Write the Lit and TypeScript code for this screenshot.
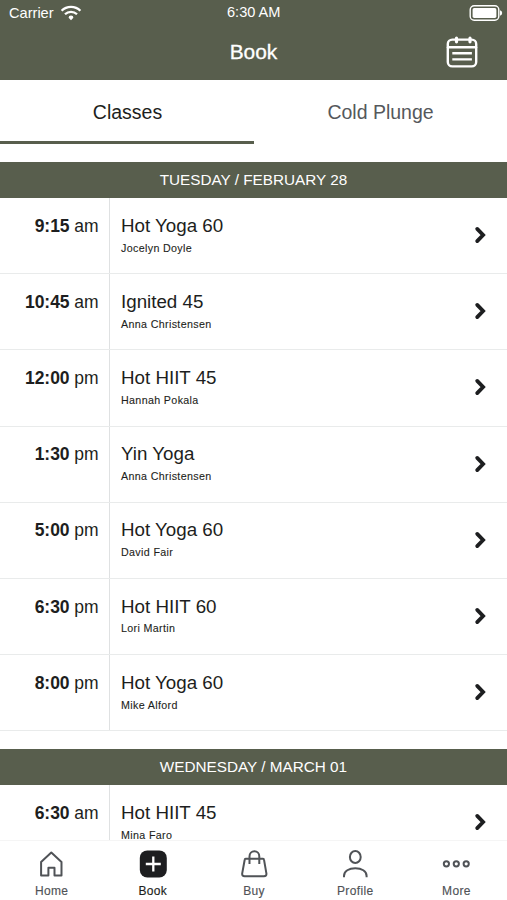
import { LitElement, html, css, svg } from "lit";
import { customElement, property } from "lit/decorators.js";
import { classMap } from "lit/directives/class-map.js";

interface ClassItem {
  time: string;
  period: string;
  name: string;
  teacher: string;
}

interface Day {
  label: string;
  items: ClassItem[];
}

const item = (time: string, period: string, name: string, teacher: string): ClassItem => ({
  time,
  period,
  name,
  teacher,
});

const DAYS: Day[] = [
  {
    label: "TUESDAY / FEBRUARY 28",
    items: [
      item("9:15", "am", "Hot Yoga 60", "Jocelyn Doyle"),
      item("10:45", "am", "Ignited 45", "Anna Christensen"),
      item("12:00", "pm", "Hot HIIT 45", "Hannah Pokala"),
      item("1:30", "pm", "Yin Yoga", "Anna Christensen"),
      item("5:00", "pm", "Hot Yoga 60", "David Fair"),
      item("6:30", "pm", "Hot HIIT 60", "Lori Martin"),
      item("8:00", "pm", "Hot Yoga 60", "Mike Alford"),
    ],
  },
  {
    label: "WEDNESDAY / MARCH 01",
    items: [item("6:30", "am", "Hot HIIT 45", "Mina Faro")],
  },
];

const NAV = [
  {
    label: "Home",
    icon: svg`<path d="M5.1 13 15.3 3.6 25.5 13V26.4H18.5V18.8H12.4V26.4H5.1Z"/>`,
  },
  {
    label: "Book",
    active: true,
    icon: svg`<rect x="1.8" y="1.4" width="27" height="27" rx="7.5" fill="currentColor" stroke="none"/><path stroke="#fff" stroke-width="2.3" d="M15.3 7.5v15M7.8 15h15"/>`,
  },
  {
    label: "Buy",
    icon: svg`<path d="M6.8 9.8H24a1 1 0 0 1 1 .9L27.4 24.4Q27.7 27.2 25 27.2H5.6Q2.9 27.2 3.2 24.4L5.7 10.7a1 1 0 0 1 1-.9ZM10.5 15V7.4a4.9 5.2 0 0 1 9.8 0V15"/>`,
  },
  {
    label: "Profile",
    icon: svg`<ellipse cx="15.3" cy="8" rx="5.4" ry="6"/><path d="M4 28.2V27C4 22 9 19.3 15.3 19.3S26.6 22 26.6 27v1.2"/>`,
  },
  {
    label: "More",
    icon: svg`<circle cx="5.4" cy="14.8" r="2.6"/><circle cx="15.3" cy="14.8" r="2.6"/><circle cx="25.2" cy="14.8" r="2.6"/>`,
  },
];

@customElement("class-row")
export class ClassRow extends LitElement {
  @property({ attribute: false }) item!: ClassItem;

  static styles = css`
    :host {
      display: grid;
      grid-template-columns: 110px 1fr 54px;
      height: 76.15px;
      box-sizing: border-box;
      border-bottom: 1px solid #e9ebeb;
      color: #1d1e20;
    }
    .time {
      box-sizing: border-box;
      border-right: 1px solid #dfe1e2;
      padding: 17.8px 10.5px 0 0;
      text-align: right;
      font-size: 17.5px;
      letter-spacing: -0.06px;
      line-height: 20px;
    }
    .info {
      padding: 16.8px 0 0 11px;
    }
    .name {
      font-size: 18.75px;
      line-height: 22px;
    }
    .teacher {
      margin-top: 4.8px;
      font-size: 10.7px;
      line-height: 13px;
      letter-spacing: 0.35px;
      -webkit-text-stroke: 0.1px currentColor;
    }
    .arrow {
      align-self: center;
      justify-self: center;
      width: 14px;
      height: 18px;
      margin-bottom: 1px;
    }
  `;

  render() {
    return html`
      <div class="time"><b>${this.item.time}</b> ${this.item.period}</div>
      <div class="info">
        <div class="name">${this.item.name}</div>
        <div class="teacher">${this.item.teacher}</div>
      </div>
      <svg class="arrow" viewBox="0 0 14 18" fill="none" stroke="currentColor" stroke-width="3.8" stroke-linecap="round">
        <path d="M4.2 2.9 10.1 9 4.2 15.1" />
      </svg>
    `;
  }
}

@customElement("app-root")
export class AppRoot extends LitElement {
  static styles = css`
    :host {
      display: flex;
      flex-direction: column;
      height: 100vh;
      overflow: hidden;
      background: #fff;
      font-family: "Liberation Sans", Arial, sans-serif;
      color: #1d1e20;
    }
    .top {
      flex: none;
      height: 80px;
      background: #585e4d;
      color: #fff;
    }
    .status,
    .title-bar {
      display: grid;
      grid-template-columns: 1fr auto 1fr;
      align-items: center;
    }
    .status {
      height: 25px;
      padding: 0 4px 0 9px;
      font-size: 14.6px;
    }
    .clock {
      padding: 0 4.5px 2px 0;
    }
    .carrier {
      display: flex;
      align-items: center;
      gap: 6px;
    }
    .end {
      display: flex;
      justify-content: flex-end;
    }
    .title-bar {
      height: 54px;
      padding: 0 29px;
    }
    .title {
      font-size: 20.9px;
      font-weight: 400;
      margin: 0;
      -webkit-text-stroke: 0.3px currentColor;
    }
    .tabs {
      flex: none;
      display: flex;
      height: 64px;
    }
    .tab {
      flex: 1;
      display: flex;
      align-items: center;
      justify-content: center;
      border-bottom: 3.5px solid transparent;
      box-sizing: border-box;
      padding-top: 3px;
      font-size: 19.5px;
      color: #55585c;
    }
    .tab.active {
      padding-left: 1px;
      color: #1d1e20;
      border-color: #585e4d;
    }
    .list {
      flex: 1;
      min-height: 0;
      overflow: hidden;
    }
    .day {
      padding-top: 18.1px;
    }
    .day-label {
      display: flex;
      align-items: center;
      justify-content: center;
      height: 36px;
      background: #585e4d;
      color: #fff;
      font-size: 15.3px;
    }
    .nav {
      flex: none;
      display: flex;
      height: 60px;
      padding-left: 1px;
      box-sizing: border-box;
      border-top: 1px solid #f5f5f5;
      background: #fff;
    }
    .nav-item {
      flex: 1;
      display: flex;
      flex-direction: column;
      align-items: center;
      font-size: 12px;
      letter-spacing: 0.35px;
      line-height: 14px;
      padding-top: 8px;
      gap: 5px;
      color: #505357;
      -webkit-text-stroke: 0.15px currentColor;
    }
    .nav-item.active {
      color: #1d1e20;
    }
    .nav-icon {
      width: 30.6px;
      height: 30px;
    }
  `;

  render() {
    return html`
      <header class="top">
        <div class="status">
          <span class="carrier">
            Carrier
            <svg width="22" height="16" viewBox="0 0 22 16" fill="none" stroke="#fff" stroke-width="2.3">
              <path d="M1.6 5.7a13.4 13.4 0 0 1 18.8 0M5 9.3a8.6 8.6 0 0 1 12 0" />
              <path d="M11 15.2 8.6 12.8a2.3 2.3 0 1 1 4.8 0Z" fill="#fff" stroke="none" />
            </svg>
          </span>
          <span class="clock">6:30 AM</span>
          <span class="end">
            <svg width="34" height="18" viewBox="0 0 34 18">
              <rect x="1.2" y="1.7" width="28.6" height="14.6" rx="4" fill="none" stroke="#fff" stroke-width="1.4" />
              <rect x="3.6" y="4.1" width="23.8" height="9.8" rx="1.6" fill="#fff" />
              <path d="M31 6.3q2.2.6 2.2 2.7t-2.2 2.7Z" fill="#fff" />
            </svg>
          </span>
        </div>
        <div class="title-bar">
          <span></span>
          <h1 class="title">Book</h1>
          <span class="end">
            <svg width="32" height="32" viewBox="0 0 32 32" fill="none" stroke="#fff" stroke-width="2.4" stroke-linecap="round">
              <rect x="1.8" y="3.6" width="28.4" height="26.8" rx="4.5" />
              <path d="M2 11.2h28" />
              <path d="M10.5 2.2v3.6M24 2.2v3.6" stroke-width="3.2" />
              <path d="M6.3 17.2h19.6M6.3 23.4h19.6" stroke-linecap="butt" />
            </svg>
          </span>
        </div>
      </header>
      <nav class="tabs">
        <div class="tab active">Classes</div>
        <div class="tab">Cold Plunge</div>
      </nav>
      <main class="list">
        ${DAYS.map(
          (day) => html`
            <section class="day">
              <div class="day-label">${day.label}</div>
              ${day.items.map((entry) => html`<class-row .item=${entry}></class-row>`)}
            </section>
          `
        )}
      </main>
      <footer class="nav">
        ${NAV.map(
          (entry) => html`
            <div class=${classMap({ "nav-item": true, active: !!entry.active })}>
              <svg class="nav-icon" viewBox="0 0 30.6 30" fill="none" stroke="currentColor" stroke-width="2" stroke-linejoin="round">
                ${entry.icon}
              </svg>
              ${entry.label}
            </div>
          `
        )}
      </footer>
    `;
  }
}
